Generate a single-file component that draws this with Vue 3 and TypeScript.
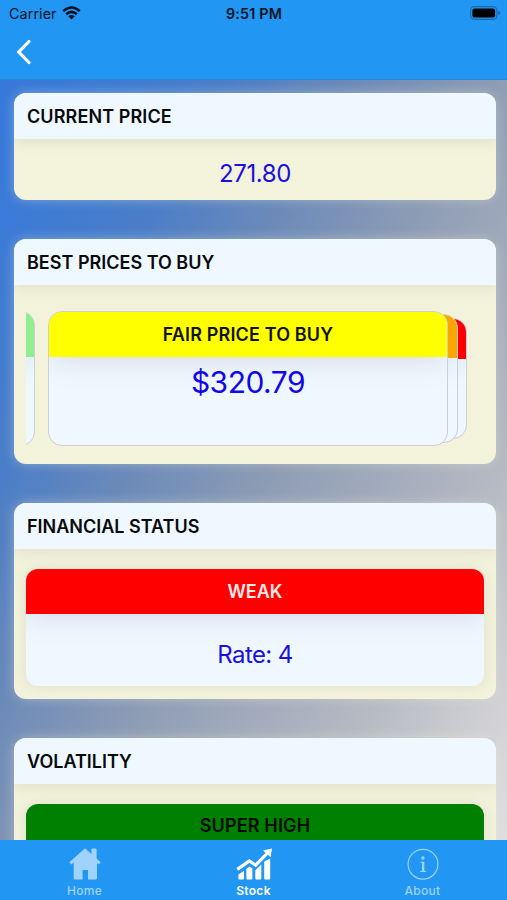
<script setup lang="ts">
interface Tab { id: string; label: string; active: boolean }

const tabs: Tab[] = [
  { id: 'home', label: 'Home', active: false },
  { id: 'stock', label: 'Stock', active: true },
  { id: 'about', label: 'About', active: false },
]
</script>

<template>
  <div class="screen">
    <header class="topbar">
      <div class="status">
        <div class="carrier">
          <span>Carrier</span>
          <svg width="19" height="14" viewBox="0 0 19 14">
            <g fill="none" stroke="#04121f" stroke-width="2.5">
              <path d="M1.2 5.1Q9.5-2.1 17.8 5.1" />
              <path d="M4.2 8.2Q9.5 3.6 14.8 8.2" />
            </g>
            <path d="M6.3 10.3Q9.5 7.7 12.7 10.3L9.5 13.6Z" fill="#04121f" />
          </svg>
        </div>
        <span class="time">9:51 PM</span>
        <svg class="battery" width="31" height="14" viewBox="0 0 31 14">
          <rect x=".6" y=".6" width="26.3" height="12.8" rx="3.8" fill="none" stroke="#176aab" stroke-width="1.1" />
          <rect x="2.4" y="2.4" width="22.7" height="9.2" rx="2.2" fill="#000" />
          <path d="M28.4 4.7Q30.2 5.5 30.2 7T28.4 9.3Z" fill="#176aab" />
        </svg>
      </div>
      <button class="back" aria-label="Back">
        <svg width="16" height="26" viewBox="0 0 16 26"><path d="M13 2.5L2.8 13 13 23.5" fill="none" stroke="#fff" stroke-width="3.2" stroke-linecap="round" stroke-linejoin="miter" /></svg>
      </button>
    </header>

    <main class="content">
      <section class="card price">
        <h2><span>CURRENT PRICE</span></h2>
        <div class="body"><p class="value">271.80</p></div>
      </section>

      <section class="card best">
        <h2><span>BEST PRICES TO BUY</span></h2>
        <div class="body">
          <div class="deck">
            <div class="slide prev"><div class="band"></div></div>
            <div class="slide third"><div class="band"></div></div>
            <div class="slide second"><div class="band"></div></div>
            <div class="slide front">
              <div class="band"><span>FAIR PRICE TO BUY</span></div>
              <p class="amount">$320.79</p>
            </div>
          </div>
        </div>
      </section>

      <section class="card status-card">
        <h2><span>FINANCIAL STATUS</span></h2>
        <div class="body">
          <div class="panel weak">
            <div class="band"><span>WEAK</span></div>
            <p class="value rate">Rate: 4</p>
          </div>
        </div>
      </section>

      <section class="card status-card">
        <h2><span>VOLATILITY</span></h2>
        <div class="body">
          <div class="panel high">
            <div class="band"><span>SUPER HIGH</span></div>
          </div>
        </div>
      </section>
    </main>

    <nav class="tabs">
      <a v-for="tab in tabs" :key="tab.id" class="tab" :class="{ active: tab.active }">
        <svg v-if="tab.id === 'home'" width="38" height="36" viewBox="0 0 38 36">
          <path d="M4.3 18.4L19 5.6 33.7 18.4" fill="none" stroke="currentColor" stroke-width="3" />
          <path d="M19 3.6L33.5 17H31V33.3Q31 34.5 29.8 34.5H22V25H16.6V34.5H8.9Q7.7 34.5 7.7 33.3V17H4.5ZM25.4 4.4Q25.4 3.6 26.2 3.6H29.8Q30.6 3.6 30.6 4.4V15L25.4 10.5Z" fill="currentColor" />
        </svg>
        <svg v-else-if="tab.id === 'stock'" width="38" height="36" viewBox="0 0 38 36">
          <path d="M2.3 24.4L14.3 16 20.7 20.2 32.5 8" fill="none" stroke="currentColor" stroke-width="3.2" />
          <path d="M28 5.4L37 3.4 35.6 12.3Z" fill="currentColor" />
          <path d="M3.4 29.5L9 25.7V33.5Q9 34.5 8 34.5H4.4Q3.4 34.5 3.4 33.5ZM11.4 23.8L14.5 21.6 17.4 23.5V33.5Q17.4 34.5 16.4 34.5H12.4Q11.4 34.5 11.4 33.5ZM20.3 25.3L26.3 19.6V33.5Q26.3 34.5 25.3 34.5H21.3Q20.3 34.5 20.3 33.5ZM29.2 16.6L35.2 13.4V33.5Q35.2 34.5 34.2 34.5H30.2Q29.2 34.5 29.2 33.5Z" fill="currentColor" />
        </svg>
        <svg v-else width="38" height="36" viewBox="0 0 38 36">
          <circle cx="19" cy="19.2" r="14.9" fill="none" stroke="currentColor" stroke-width="1.2" />
          <circle cx="18.9" cy="13" r="1.7" fill="currentColor" />
          <path d="M16.6 16.8H20.3V25.8H21.9V26.9H16.3V25.8H18V17.9H16.6Z" fill="currentColor" />
        </svg>
        <span>{{ tab.label }}</span>
      </a>
    </nav>
  </div>
</template>

<style>
body { margin: 0; }
</style>

<style scoped>
* { box-sizing: border-box; }
h2, p { margin: 0; }
.screen {
  width: 507px; height: 900px; overflow: hidden;
  display: flex; flex-direction: column;
  font-family: Inter, "Liberation Sans", sans-serif;
  background: linear-gradient(to bottom right, #3577dc 0%, #3a7ad8 12%, #4b7ec8 27%, #6b8ab9 39%, #8f9db5 54%, #b6bac3 76%, #d0d0d4 88%, #e4e3e5 100%);
}
.topbar { flex: 0 0 79px; background: #2196f3; box-shadow: 0 1px 0 #3484d6; }
.status {
  height: 28px; padding: 0 6px 2px 9px;
  display: grid; grid-template-columns: 1fr auto 1fr; align-items: center;
  color: #04121f; font-size: 14.3px;
}
.carrier { display: flex; align-items: center; gap: 5px; letter-spacing: .1px; }
.carrier svg { margin-top: -1px; }
.time { font-weight: 600; letter-spacing: .2px; margin-right: 2px; }
.battery { justify-self: end; }
.back { display: block; margin: 11px 0 0 16px; padding: 0; border: 0; background: none; height: 26px; }
.back svg { display: block; }
.content {
  flex: 1; min-height: 0; overflow: hidden;
  padding: 14px 11px 0 14px;
  display: flex; flex-direction: column; gap: 39px;
}
.card {
  flex: none; border-radius: 12px; background: #f3f3dc;
  box-shadow: 0 0 12px rgba(245, 245, 220, .36);
}
.card h2 {
  height: 46px; padding: 2px 0 0 13px; display: flex; align-items: center;
  border-radius: 12px 12px 0 0; background: #f0f8ff;
  box-shadow: 0 3px 14px rgba(100, 100, 90, .13);
  clip-path: inset(0 0 -18px 0);
  color: #080a0c; font-size: 18px; font-weight: 600; line-height: 22px;
}
.price { height: 107px; }
.price h2 span { letter-spacing: .1px; }
.best { height: 225px; }
.status-card { height: 195.5px; }
.value { color: #1b10dc; font-size: 24px; line-height: 30px; text-align: center; letter-spacing: -.4px; }
.price .value { padding-top: 20px; }
.deck { position: relative; margin: 26px 12px 0; height: 135px; overflow: hidden; }
.slide {
  position: absolute; overflow: hidden;
  border: 1px solid #cccfd3; border-radius: 14px; background: #f0f8ff;
}
.front { left: 22px; top: 0; width: 400px; height: 135px; }
.second { left: 200px; top: 3px; width: 232px; height: 129px; }
.third { left: 220px; top: 7px; width: 221px; height: 121px; }
.prev { left: -391px; top: 0; width: 400px; height: 135px; }
.band {
  height: 45px; display: flex; align-items: center; justify-content: center;
  color: #10120a; font-size: 18px; font-weight: 600;
  box-shadow: 0 4px 28px rgba(80, 80, 100, .16);
}
.front .band { background: #ff0; letter-spacing: .15px; }
.second .band { background: orange; height: 43px; }
.third .band { background: red; height: 40px; }
.prev .band { background: #90ee90; }
.amount { color: #1208e8; font-size: 30px; line-height: 38px; text-align: center; padding-top: 6px; letter-spacing: -.5px; }
.status-card .body { padding: 20px 12px 0; }
.panel {
  height: 117px; overflow: hidden; border-radius: 12px; background: #f0f8ff;
  box-shadow: 0 0 14px rgba(100, 100, 100, .13);
}
.weak .band { background: red; color: #ffeaea; }
.high .band { background: green; color: #020a02; letter-spacing: .15px; padding-bottom: 1px; }
.rate { padding-top: 26px; letter-spacing: -.6px; }
.tabs {
  position: relative; flex: 0 0 60px; display: grid; grid-template-columns: repeat(3, 1fr);
  background: #2196f3;
}
.tab { display: flex; flex-direction: column; align-items: center; padding-top: 5px; color: #a0d3fb; }
.tab svg { display: block; }
.tab span { font-size: 12px; line-height: 16px; margin-top: 2px; letter-spacing: .3px; font-weight: 500; }
.tab.active { color: #fff; }
.tab.active span { font-weight: 600; letter-spacing: .3px; }
</style>
